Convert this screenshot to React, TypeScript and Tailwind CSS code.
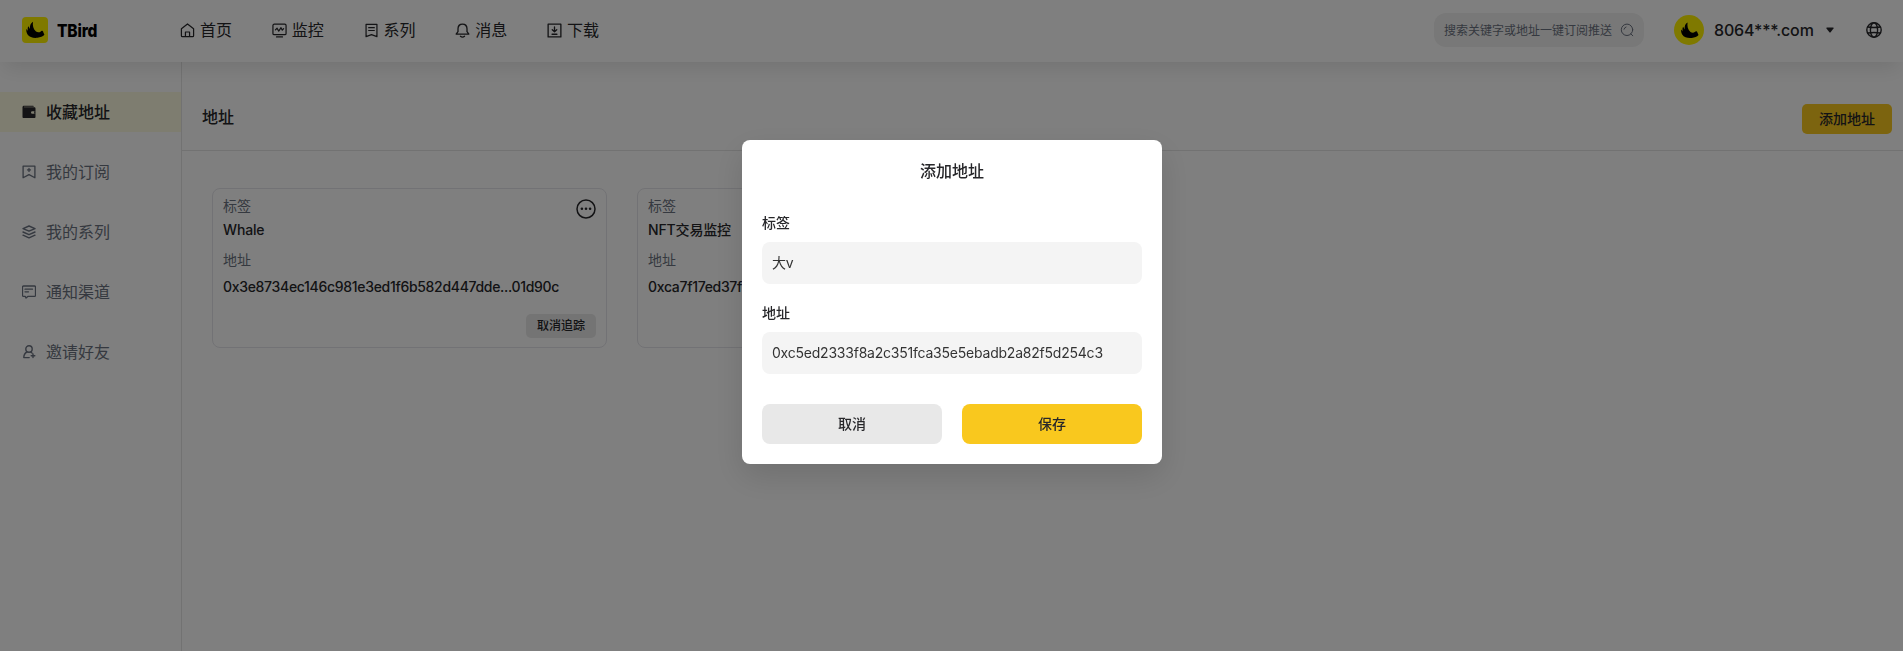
import React from "react";

type IconProps = { className?: string };

function Svg({ className, children, vb = "0 0 16 16", sw = 1.1 }: { className?: string; children: React.ReactNode; vb?: string; sw?: number }) {
  return (
    <svg className={className} viewBox={vb} fill="none" stroke="currentColor" strokeWidth={sw} strokeLinejoin="round" strokeLinecap="round">
      {children}
    </svg>
  );
}

const Bird = ({ className }: IconProps) => (
  <svg className={className} viewBox="0 0 26 26" fill="#000">
    <path d="M11 4.800C10.400 8.400 11.200 12.200 14 14.600C15.600 15.600 17.400 15.600 18.800 14.400C19.600 13.300 21.200 13.900 21.300 15.300L22.400 17.800C20.600 19.600 18.600 20.400 15.400 20.800C11.400 21.200 7.400 20.400 5.400 17.200C4.200 15 4 12.800 4.600 12L6 14C5.400 11.800 5.800 10 6.400 9.200L8 12C7.600 8.400 8.800 6 11 4.800Z" />
  </svg>
);

const HomeIcon = ({ className }: IconProps) => (
  <Svg className={className} sw={1.3}>
    <path d="M1.500 6.200 8 1l6.500 5.200v7.300a1 1 0 0 1-1 1h-11a1 1 0 0 1-1-1Z" />
    <path d="M5.800 14.200V9.600h4.400v4.600" />
  </Svg>
);
const MonitorIcon = ({ className }: IconProps) => (
  <Svg className={className} sw={1.3}>
    <rect x="1" y="1.300" width="14" height="11.200" rx="1.400" />
    <path d="M3.600 7.400 5.400 5.600 7.200 8.600 9.600 5 11 7.600 12.400 6M4.800 14.900h6.400" />
  </Svg>
);
const SeriesIcon = ({ className }: IconProps) => (
  <Svg className={className} sw={1.3}>
    <path d="M2.200 1.400h11.600v13.200L8 12.400l-5.800 2.200ZM5 5h6M5 8h6" />
  </Svg>
);
const BellIcon = ({ className }: IconProps) => (
  <Svg className={className} sw={1.400}>
    <path d="M8 1.200c-3 0-4.800 2.200-4.800 5v3L1.200 11.800h13.600L12.800 9.200v-3c0-2.800-1.800-5-4.800-5ZM5.800 14.200c1.200 1 3.200 1 4.400 0" />
  </Svg>
);
const DownloadIcon = ({ className }: IconProps) => (
  <Svg className={className} sw={1.400}>
    <rect x="1.200" y="1.200" width="13.600" height="13.600" />
    <path d="M8 4.200v5M5.600 7.200 8 9.400l2.400-2.200M5.400 12h5.200" />
  </Svg>
);
const WalletIcon = ({ className }: IconProps) => (
  <svg className={className} viewBox="0 0 14 14" fill="currentColor">
    <path d="M2 .8h8.800c.6 0 1 .4 1 .9H2v.5h10.300c.7 0 1.200.5 1.200 1.200v2.900H10.200a1.200 1.200 0 0 0 0 2.400h3.300v3.200c0 .7-.5 1.200-1.200 1.200H1.700C1 13.100.5 12.600.5 11.900V2.200C.5 1.400 1.200.8 2 .8Z" />
    <path d="M13.500 6.300v2.400h-1.300V6.300Z" />
  </svg>
);
const BookmarkIcon = ({ className }: IconProps) => (
  <Svg className={className} vb="0 0 14 14" sw={1.300}>
    <path d="M1.100 1.100h11.800v11.700L7 9.600l-5.900 3.200ZM7 3.400v3M5.500 4.900h3" />
  </Svg>
);
const LayersIcon = ({ className }: IconProps) => (
  <Svg className={className} vb="0 0 14 14" sw={1.400}>
    <path d="M7 1 13 3.600 7 6.200 1 3.600ZM1 7l6 2.700L13 7M1 10.200l6 2.700 6-2.700" />
  </Svg>
);
const MessageIcon = ({ className }: IconProps) => (
  <Svg className={className} vb="0 0 14 14" sw={1.300}>
    <path d="M1.500 1h11a1 1 0 0 1 1 1v8.400a1 1 0 0 1-1 1H5.800L4 13l-.8-1.600H1.500a1 1 0 0 1-1-1V2a1 1 0 0 1 1-1ZM3 4.200h7.500M3 6.800h3.500" />
  </Svg>
);
const InviteIcon = ({ className }: IconProps) => (
  <Svg className={className} vb="0 0 14 14" sw={1.400}>
    <circle cx="7" cy="4" r="3.200" />
    <path d="M5 7C3 8 1.800 10 1.800 12.600H7.200M8.800 7.200 10 8M11 9v3.600M9.200 10.800h3.600" />
  </Svg>
);
const SearchIcon = ({ className }: IconProps) => (
  <Svg className={className} vb="0 0 14 14" sw={1}>
    <circle cx="7" cy="6.800" r="5.700" />
    <path d="M10.800 10.800 12.800 12.800M4 6.200A3 3 0 0 1 6 4" />
  </Svg>
);
const GlobeIcon = ({ className }: IconProps) => (
  <Svg className={className} sw={1.400}>
    <circle cx="8" cy="8" r="7.200" />
    <ellipse cx="8" cy="8" rx="3.600" ry="7.200" />
    <path d="M2 5c3.600.6 8.400.6 12 0M2 11c3.600-.6 8.400-.6 12 0" />
  </Svg>
);
const MoreIcon = ({ className }: IconProps) => (
  <svg className={className} viewBox="0 0 20 20" fill="currentColor">
    <circle cx="10" cy="10" r="9" fill="none" stroke="currentColor" strokeWidth="1.500" />
    <circle cx="5.900" cy="9.800" r="1.300" />
    <circle cx="10" cy="9.800" r="1.300" />
    <circle cx="14.100" cy="9.800" r="1.300" />
  </svg>
);

const NAV = [
  { label: "首页", Icon: HomeIcon },
  { label: "监控", Icon: MonitorIcon },
  { label: "系列", Icon: SeriesIcon },
  { label: "消息", Icon: BellIcon },
  { label: "下载", Icon: DownloadIcon },
];

const MENU = [
  { label: "收藏地址", Icon: WalletIcon, active: true },
  { label: "我的订阅", Icon: BookmarkIcon },
  { label: "我的系列", Icon: LayersIcon },
  { label: "通知渠道", Icon: MessageIcon },
  { label: "邀请好友", Icon: InviteIcon },
];

const CARDS = [
  { tag: "Whale", address: "0x3e8734ec146c981e3ed1f6b582d447dde...01d90c" },
  { tag: "NFT交易监控", address: "0xca7f17ed37f5c2b0a9d16e3b582d447d...8a02e1" },
];

function AddressCard({ tag, address }: { tag: string; address: string }) {
  return (
    <div className="flex h-[160px] w-[395px] flex-col rounded-lg border border-[#e5e5ea] px-[10px] pb-[9px] text-sm">
      <div className="flex justify-between">
        <div className="pt-[7px]">
          <div className="leading-5 text-[#6b7280]">标签</div>
          <div className="mt-1 leading-5 font-medium tracking-[-0.15px]">{tag}</div>
        </div>
        <MoreIcon className="mt-[10px] size-5" />
      </div>
      <div className="mt-[10px] leading-5 text-[#6b7280]">地址</div>
      <div className="mt-[7px] leading-5 font-medium tracking-[-0.31px] whitespace-nowrap">{address}</div>
      <button className="mt-auto h-6 w-[70px] self-end rounded-[5px] bg-[#e8e8e8] text-xs font-medium">取消追踪</button>
    </div>
  );
}

function Field({ label, value }: { label: string; value: string }) {
  return (
    <label className="block h-[90px]">
      <span className="block text-sm leading-5 font-medium">{label}</span>
      <input className="mt-[9px] h-[42px] w-full rounded-lg bg-[#f4f4f4] px-[10px] pb-[2px] text-sm tracking-[-0.22px] text-[#333] outline-none" defaultValue={value} />
    </label>
  );
}

export default function App() {
  return (
    <div className="flex h-[651px] flex-col overflow-hidden bg-white font-['Inter','Noto_Sans_CJK_SC',sans-serif] text-[#27272a]">
      <header className="relative z-10 flex h-[62px] shrink-0 items-center bg-white pb-[2px] pl-[22px] shadow-[0_10px_20px_-4px_rgba(0,0,0,0.1)]">
        <div className="flex w-[158px] items-center gap-[9px]">
          <span className="flex size-[26px] items-center justify-center rounded bg-[#fff200]">
            <Bird className="size-[26px]" />
          </span>
          <span className="origin-left scale-x-[0.86] text-[18px] font-extrabold tracking-[-0.2px] text-black">TBird</span>
        </div>
        <nav className="flex">
          {NAV.map(({ label, Icon }) => (
            <a key={label} className="flex w-[91.750px] items-center gap-[5px]">
              <Icon className="size-[15px]" />
              <span className="text-base">{label}</span>
            </a>
          ))}
        </nav>
        <div className="ml-auto flex items-center">
          <div className="flex h-[34px] w-[210px] items-center rounded-[12px] bg-[#f0f0f0] pl-[10px] text-xs text-[#6b7280]">
            <span className="pt-px whitespace-nowrap">搜索关键字或地址一键订阅推送</span>
            <SearchIcon className="ml-2 size-[14px] shrink-0" />
          </div>
          <span className="ml-[30px] flex size-[30px] items-center justify-center rounded-full bg-[#fff200]">
            <Bird className="size-[25px]" />
          </span>
          <span className="ml-[10px] w-[102px] text-base font-medium tracking-[-0.15px]">8064***.com</span>
          <svg className="ml-[10px] h-[6px] w-[8px]" viewBox="0 0 8 6" fill="currentColor">
            <path d="M1 .5h6q1 0 .5 1L4.600 5.200q-.6.600-1.200 0L.5 1.500Q0 .5 1 .5Z" />
          </svg>
          <GlobeIcon className="mr-[21px] ml-[32px] size-4" />
        </div>
      </header>
      <div className="flex min-h-0 flex-1">
        <aside className="flex w-[182px] shrink-0 flex-col gap-5 border-r border-[#e5e5e5] pt-[30px]">
          {MENU.map(({ label, Icon, active }) => (
            <a key={label} className={`flex h-10 items-center gap-[10px] pl-[22px] text-base ${active ? "bg-[#fcfbe0] font-medium" : "text-[#6b7280]"}`}>
              <Icon className="size-[14px]" />
              <span>{label}</span>
            </a>
          ))}
        </aside>
        <main className="flex-1">
          <div className="flex h-[89px] items-center justify-between border-b border-[#e5e5e5] pt-[26px] pr-[11px] pl-[20px]">
            <h1 className="pb-1 text-base font-medium">地址</h1>
            <button className="h-[30px] w-[90px] rounded-[5px] bg-[#f9c81e] text-sm font-medium">添加地址</button>
          </div>
          <div className="flex gap-[30px] pt-[37px] pl-[30px]">
            {CARDS.map((c) => (
              <AddressCard key={c.tag} {...c} />
            ))}
          </div>
        </main>
      </div>
      <div className="fixed inset-0 z-20 flex items-start justify-center bg-black/50 pt-[140px] pl-px">
        <div className="flex h-[324px] w-[420px] flex-col rounded-lg bg-white px-5 shadow-[0_12px_32px_rgba(0,0,0,0.13)]">
          <h2 className="mt-[19px] text-center text-base leading-6 font-medium">添加地址</h2>
          <div className="mt-[30px]">
            <Field label="标签" value="大v" />
            <Field label="地址" value="0xc5ed2333f8a2c351fca35e5ebadb2a82f5d254c3" />
          </div>
          <div className="mt-[11px] flex gap-5 text-sm font-medium">
            <button className="h-10 flex-1 rounded-lg bg-[#e8e8e8]">取消</button>
            <button className="h-10 flex-1 rounded-lg bg-[#f9c81e]">保存</button>
          </div>
        </div>
      </div>
    </div>
  );
}
